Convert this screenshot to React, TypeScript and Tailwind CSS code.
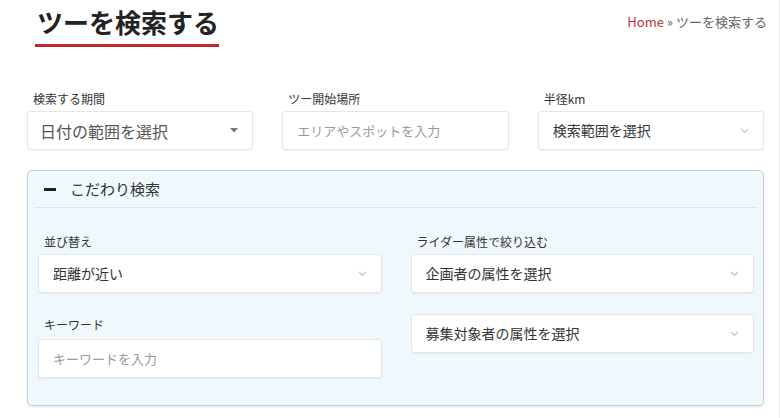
const font = { fontFamily: '"Noto Sans CJK JP", "Noto Sans", sans-serif' };

const Chevron = () => (
  <svg width="9" height="6" viewBox="0 0 9 6" className="shrink-0">
    <path d="M1 1l3.5 3.5L8 1" fill="none" stroke="#c4c4c4" strokeWidth="1.2" />
  </svg>
);

const Caret = () => (
  <svg width="8" height="5" viewBox="0 0 8 5" className="shrink-0">
    <path d="M0 0h8L4 4.5z" fill="#777" />
  </svg>
);

const SelectBox = ({ text, big }: { text: string; big?: boolean }) => (
  <div
    className={`flex h-[39px] items-center justify-between rounded-[3px] border border-[#e6e6e6] bg-white pr-[14px] shadow-[0_1px_2px_rgba(0,0,0,0.06)] ${
      big ? "pl-[12px]" : "pl-[14px]"
    }`}
  >
    <span className={big ? "text-[16px] text-[#555]" : "text-[14px] text-[#333]"}>{text}</span>
    {big ? <Caret /> : <Chevron />}
  </div>
);

const InputBox = ({ text }: { text: string }) => (
  <div className="flex h-[39px] items-center rounded-[3px] border border-[#e6e6e6] bg-white pl-[14px] shadow-[0_1px_2px_rgba(0,0,0,0.06)]">
    <span className="text-[13px] text-[#999]">{text}</span>
  </div>
);

const Label = ({ text }: { text: string }) => (
  <div className="mb-[4px] pl-[6px] text-[12px] leading-[16px] text-[#333]">{text}</div>
);

export default function App() {
  return (
    <div style={font} className="h-[418px] w-[780px] overflow-hidden border-r border-[#e8e8e8] bg-white">
      <div className="flex items-start justify-between pl-[37px] pr-[12px] pt-[5px]">
        <div>
          <h1 className="text-[26px] font-bold leading-[34px] text-[#222]">ツーを検索する</h1>
          <div className="ml-[-2px] mt-[5px] h-[3px] w-[184px] bg-[#c0272d]" />
        </div>
        <div className="mt-[7px] text-[13px] text-[#666]">
          <span className="text-[#b8333b]">Home</span> » ツーを検索する
        </div>
      </div>

      <div className="mt-[44px] grid grid-cols-3 gap-x-[29px] pl-[27px] pr-[15px]">
        <div>
          <Label text="検索する期間" />
          <SelectBox text="日付の範囲を選択" big />
        </div>
        <div>
          <Label text="ツー開始場所" />
          <InputBox text="エリアやスポットを入力" />
        </div>
        <div>
          <Label text="半径km" />
          <SelectBox text="検索範囲を選択" />
        </div>
      </div>

      <div className="ml-[27px] mr-[15px] mt-[20px] h-[236px] rounded-[5px] border border-[#c9cfd3] bg-[#eef8fd] shadow-[0_1px_2px_rgba(0,0,0,0.12)]">
        <div className="mx-[6px] flex h-[37px] items-center border-b border-[#dce6ea] pl-[10px]">
          <div className="h-[3px] w-[12px] bg-[#222]" />
          <span className="ml-[14px] text-[15px] text-[#333]">こだわり検索</span>
        </div>
        <div className="mt-[26px] grid grid-cols-2 gap-x-[29px] pl-[10px] pr-[9px]">
          <div>
            <Label text="並び替え" />
            <SelectBox text="距離が近い" />
            <div className="mt-[24px]">
              <div className="mb-[6px] pl-[6px] text-[12px] leading-[16px] text-[#333]">キーワード</div>
              <InputBox text="キーワードを入力" />
            </div>
          </div>
          <div>
            <Label text="ライダー属性で絞り込む" />
            <SelectBox text="企画者の属性を選択" />
            <div className="mt-[21px]">
              <SelectBox text="募集対象者の属性を選択" />
            </div>
          </div>
        </div>
      </div>
    </div>
  );
}
